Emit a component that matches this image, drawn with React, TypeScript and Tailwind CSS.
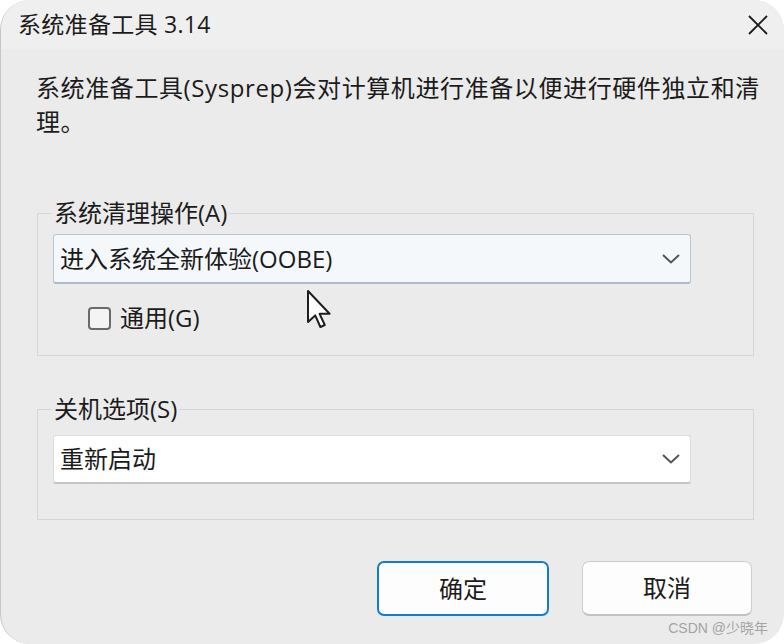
import { type FC } from "react"

const font = "font-['Open_Sans','Noto_Sans_CJK_SC',sans-serif]"

const Chevron: FC = () => (
    <svg width="18" height="10" viewBox="0 0 18 10" className="shrink-0">
        <polyline points="1,1 9,8.5 17,1" fill="none" stroke="#555555" strokeWidth="2" />
    </svg>
)

type SelectProps = {
    value: string,
    focused?: boolean
}

const Select: FC<SelectProps> = ({ value, focused }) => (
    <div
        className={
            focused
                ? "ml-[15px] w-[638px] h-[50px] flex items-center justify-between pl-[6px] pr-[10px] rounded-[3px] border border-[#b8c6d3] border-b-2 border-b-[#aebccb] bg-[#f5f8fb]"
                : "ml-[15px] w-[638px] h-[49px] flex items-center justify-between pl-[6px] pr-[10px] rounded-[3px] border border-[#dcdcdc] border-b-2 border-b-[#c4c4c4] bg-white"
        }
    >
        <span className="leading-none">{value}</span>
        <Chevron />
    </div>
)

const Cursor: FC = () => (
    <svg width="26" height="40" viewBox="0 0 13 20" className="absolute left-[305px] top-[289px]">
        <path
            d="M1 1 L1 16.5 L4.6 13.2 L7.2 19 L9.4 18 L6.8 12.4 L11.8 12.4 Z"
            fill="#ffffff"
            stroke="#1e1e1e"
            strokeWidth="1"
            strokeLinejoin="round"
        />
    </svg>
)

const App: FC = () => {
    return (
        <div className={`w-[784px] h-[644px] bg-white ${font} text-[24px] text-[#1b1b1b]`}>
            <div className="relative w-[784px] h-[644px] rounded-[30px] overflow-hidden bg-[#ebebeb] border-l border-[#c6c6c6] flex flex-col">
                {/* title bar */}
                <div className="h-[50px] shrink-0 flex items-center justify-between pl-[17px] pr-[15px] bg-[#efefef] border-b border-[#ececec]">
                    <span className="leading-none text-[23px] tracking-[0.3px]">系统准备工具 3.14</span>
                    <svg width="22" height="22" viewBox="0 0 22 22">
                        <path d="M2 2 L20 20 M20 2 L2 20" stroke="#1a1a1a" strokeWidth="1.8" />
                    </svg>
                </div>

                <p className="mt-[21px] ml-[35px] leading-[34px] tracking-[0.6px]">
                    <span className="block whitespace-nowrap">系统准备工具(Sysprep)会对计算机进行准备以便进行硬件独立和清</span>
                    <span className="block">理。</span>
                </p>

                <fieldset className="mt-[60px] ml-[36px] w-[717px] border border-[#d6d6d6] pt-[7px] pb-[25px]">
                    <legend className="ml-[14px] px-[2px] leading-[28px]">系统清理操作(A)</legend>
                    <Select value="进入系统全新体验(OOBE)" focused />
                    <label className="mt-[22px] ml-[50px] flex items-center gap-[9px]">
                        <span className="w-[23px] h-[23px] rounded-[4px] border-2 border-[#6a6a6a] bg-[#f4f4f4]" />
                        <span className="leading-none">通用(G)</span>
                    </label>
                </fieldset>

                <fieldset className="mt-[39px] ml-[36px] w-[717px] border border-[#d6d6d6] pt-[12px] pb-[35px]">
                    <legend className="ml-[14px] px-[2px] leading-[28px]">关机选项(S)</legend>
                    <Select value="重新启动" />
                </fieldset>

                <div className="mt-[41px] flex justify-end gap-[33px] pr-[32px]">
                    <button className="w-[172px] h-[55px] rounded-[7px] border-2 border-[#0f7fd6] bg-[#fdfdfd]">
                        确定
                    </button>
                    <button className="w-[170px] h-[55px] rounded-[7px] border border-[#cdcdcd] border-b-2 border-b-[#c2c2c2] bg-[#fdfdfd]">
                        取消
                    </button>
                </div>

                <div className="mt-[2px] pr-[16px] text-right text-[14px] leading-[20px] text-[#a3a3a3] font-['Liberation_Sans','Noto_Sans_CJK_SC',sans-serif]">
                    CSDN @少晓年
                </div>

                <Cursor />
            </div>
        </div>
    )
}

export default App
